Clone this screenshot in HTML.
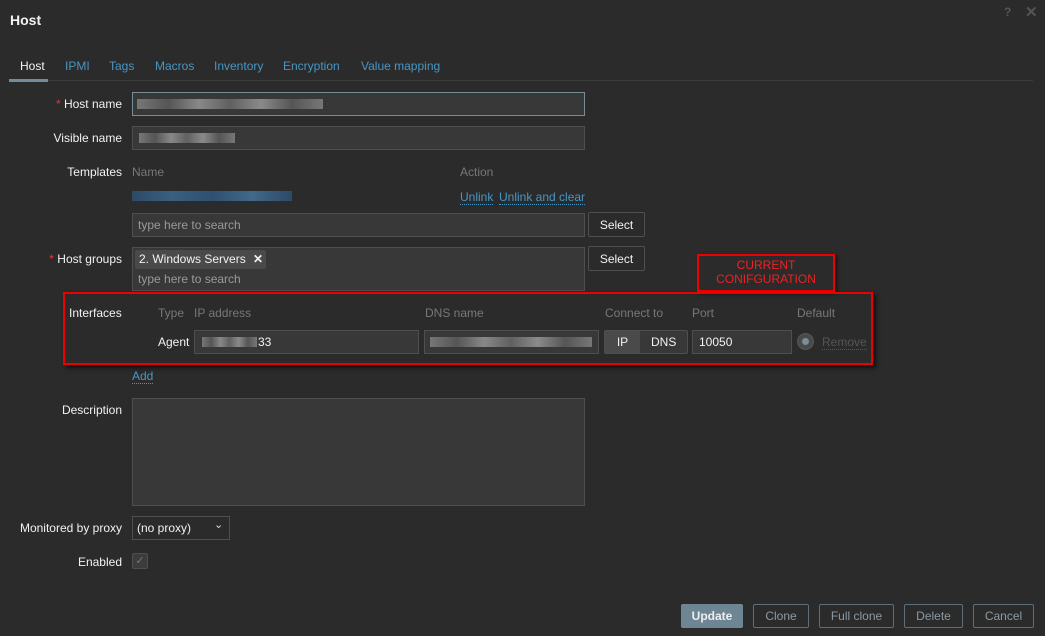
<!DOCTYPE html>
<html><head><meta charset="utf-8"><style>
*{box-sizing:border-box;margin:0;padding:0}
body{width:1045px;height:636px;background:#2b2b2b;font-family:"Liberation Sans",Arial,sans-serif;font-size:12px;color:#f2f2f2;position:relative;overflow:hidden}
.a{position:absolute;white-space:nowrap}
.lbl{position:absolute;right:923px;white-space:nowrap}
.in{position:absolute;background:#383838;border:1px solid #4f4f4f}
.btn{position:absolute;background:#2b2b2b;border:1px solid #4f4f4f;border-radius:2px;color:#f2f2f2;text-align:center}
.g{color:#787878}
.lnk{color:#4796c4}
.u{border-bottom:1px dotted #4796c4}
.star{color:#e33734}
.blur{position:absolute;height:10px;background:linear-gradient(90deg,#777,#555,#888,#606060,#8a8a8a,#555,#777)}
.ob{position:absolute;border:1px solid #5d6f7a;border-radius:2px;color:#8a9aa4;text-align:center;height:24px;line-height:22px}
</style></head><body>
<div class="a" style="left:10px;top:12px;font-size:14px;font-weight:bold;color:#f2f2f2">Host</div>
<div class="a" style="left:1004px;top:5px;color:#555;font-weight:bold">?</div>
<div class="a" style="left:1025px;top:3px;color:#555;font-size:15px;font-weight:bold">✕</div>

<div class="a" style="left:20px;top:59px">Host</div>
<div class="a lnk" style="left:65px;top:59px">IPMI</div>
<div class="a lnk" style="left:109px;top:59px">Tags</div>
<div class="a lnk" style="left:155px;top:59px">Macros</div>
<div class="a lnk" style="left:214px;top:59px">Inventory</div>
<div class="a lnk" style="left:283px;top:59px">Encryption</div>
<div class="a lnk" style="left:361px;top:59px">Value mapping</div>
<div class="a" style="left:9px;top:80px;width:1024px;height:1px;background:#3d3d3d"></div>
<div class="a" style="left:9px;top:79px;width:39px;height:3px;background:#768d99"></div>

<div class="lbl" style="top:97px"><span class="star">* </span>Host name</div>
<div class="in" style="left:132px;top:92px;width:453px;height:24px;border-color:#768d99"></div>
<div class="blur" style="left:137px;top:99px;width:186px"></div>
<div class="lbl" style="top:131px">Visible name</div>
<div class="in" style="left:132px;top:126px;width:453px;height:24px"></div>
<div class="blur" style="left:139px;top:133px;width:96px"></div>

<div class="lbl" style="top:165px">Templates</div>
<div class="a g" style="left:132px;top:165px">Name</div>
<div class="a g" style="left:460px;top:165px">Action</div>
<div class="blur" style="left:132px;top:191px;width:160px;background:linear-gradient(90deg,#2d4a66,#3a5f80,#2f5070,#42688a,#2d4a66)"></div>
<div class="a lnk u" style="left:460px;top:190px">Unlink</div>
<div class="a lnk u" style="left:499px;top:190px">Unlink and clear</div>
<div class="in" style="left:132px;top:213px;width:453px;height:24px"></div>
<div class="a g" style="left:138px;top:218px;color:#9a9a9a">type here to search</div>
<div class="btn" style="left:588px;top:212px;width:57px;height:25px;line-height:24px">Select</div>

<div class="lbl" style="top:252px"><span class="star">* </span>Host groups</div>
<div class="in" style="left:132px;top:247px;width:453px;height:44px"></div>
<div class="a" style="left:135px;top:250px;width:131px;height:19px;background:#4a4a4a;border-radius:2px;padding:2px 4px">2. Windows Servers <b style="margin-left:4px">✕</b></div>
<div class="a" style="left:138px;top:272px;color:#9a9a9a">type here to search</div>
<div class="btn" style="left:588px;top:246px;width:57px;height:25px;line-height:24px">Select</div>

<div class="a" style="left:697px;top:254px;width:138px;height:38px;border:2px solid #e00;box-shadow:2px 2px 3px #111;color:#e22;text-align:center;font-size:12px;line-height:14px;padding-top:2px">CURRENT<br>CONIFGURATION</div>

<div class="a" style="left:63px;top:292px;width:810px;height:73px;border:2px solid #e00;box-shadow:3px 3px 4px #111"></div>
<div class="a" style="left:69px;top:306px">Interfaces</div>
<div class="a g" style="left:158px;top:306px">Type</div>
<div class="a g" style="left:194px;top:306px">IP address</div>
<div class="a g" style="left:425px;top:306px">DNS name</div>
<div class="a g" style="left:605px;top:306px">Connect to</div>
<div class="a g" style="left:692px;top:306px">Port</div>
<div class="a g" style="left:797px;top:306px">Default</div>
<div class="a" style="left:158px;top:335px">Agent</div>
<div class="in" style="left:194px;top:330px;width:225px;height:24px"></div>
<div class="blur" style="left:202px;top:337px;width:55px"></div>
<div class="a" style="left:258px;top:335px">33</div>
<div class="in" style="left:424px;top:330px;width:175px;height:24px"></div>
<div class="blur" style="left:430px;top:337px;width:162px"></div>
<div class="a" style="left:604px;top:330px;width:84px;height:24px;border:1px solid #4f4f4f;border-radius:2px;background:#383838"></div>
<div class="a" style="left:605px;top:331px;width:35px;height:22px;background:#4a4a4a;text-align:center;line-height:22px">IP</div>
<div class="a" style="left:651px;top:335px">DNS</div>
<div class="in" style="left:692px;top:330px;width:100px;height:24px"></div>
<div class="a" style="left:699px;top:335px">10050</div>
<div class="a" style="left:797px;top:333px;width:17px;height:17px;border-radius:50%;background:#4a4a4a;border:1px solid #555"></div>
<div class="a" style="left:802px;top:338px;width:7px;height:7px;border-radius:50%;background:#7b8e99"></div>
<div class="a" style="left:822px;top:335px;color:#555;border-bottom:1px dotted #555">Remove</div>

<div class="a lnk u" style="left:132px;top:369px">Add</div>

<div class="lbl" style="top:403px">Description</div>
<div class="in" style="left:132px;top:398px;width:453px;height:108px"></div>

<div class="lbl" style="top:521px">Monitored by proxy</div>
<div class="in" style="left:132px;top:516px;width:98px;height:24px;background:#2b2b2b"></div>
<div class="a" style="left:137px;top:521px">(no proxy)</div>
<div class="a" style="left:214px;top:518px;color:#ddd;font-size:11px">⌄</div>

<div class="lbl" style="top:555px">Enabled</div>
<div class="a" style="left:132px;top:553px;width:16px;height:16px;background:#3c3c3c;border:1px solid #4f4f4f;border-radius:2px;color:#777;font-size:11px;text-align:center;line-height:14px">✓</div>

<div class="a" style="left:681px;top:604px;width:62px;height:24px;background:#6e8694;border-radius:2px;color:#eee;font-weight:bold;text-align:center;line-height:24px">Update</div>
<div class="ob" style="left:753px;top:604px;width:56px">Clone</div>
<div class="ob" style="left:819px;top:604px;width:75px">Full clone</div>
<div class="ob" style="left:904px;top:604px;width:59px">Delete</div>
<div class="ob" style="left:973px;top:604px;width:61px">Cancel</div>
</body></html>
